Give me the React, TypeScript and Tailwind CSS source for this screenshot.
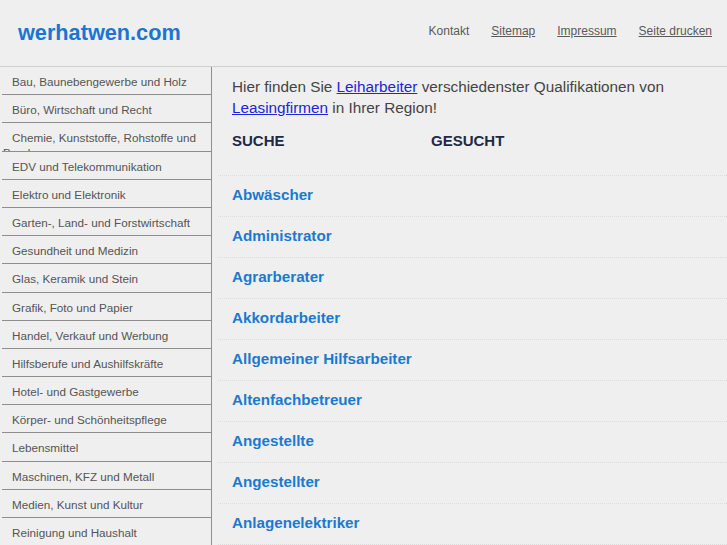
import React from 'react'

const categories = [
  'Bau, Baunebengewerbe und Holz',
  'Büro, Wirtschaft und Recht',
  'Chemie, Kunststoffe, Rohstoffe und Bergbau',
  'EDV und Telekommunikation',
  'Elektro und Elektronik',
  'Garten-, Land- und Forstwirtschaft',
  'Gesundheit und Medizin',
  'Glas, Keramik und Stein',
  'Grafik, Foto und Papier',
  'Handel, Verkauf und Werbung',
  'Hilfsberufe und Aushilfskräfte',
  'Hotel- und Gastgewerbe',
  'Körper- und Schönheitspflege',
  'Lebensmittel',
  'Maschinen, KFZ und Metall',
  'Medien, Kunst und Kultur',
  'Reinigung und Haushalt',
  'Sicherheit und Bewachung',
  'Transport und Logistik',
]

const jobs = [
  'Abwäscher',
  'Administrator',
  'Agrarberater',
  'Akkordarbeiter',
  'Allgemeiner Hilfsarbeiter',
  'Altenfachbetreuer',
  'Angestellte',
  'Angestellter',
  'Anlagenelektriker',
  'Anlagenmechaniker',
]

function Header() {
  return (
    <div className="flex h-[67px] items-center justify-between border-b border-[#cfcfcf] pl-[18px] pr-[15px]">
      <a href="#" className="mt-[1px] text-[21.7px] font-bold text-[#1976d2]">
        werhatwen.com
      </a>
      <nav className="-mt-[4px] flex gap-[22px] text-[12px] text-[#5a5a5a]">
        <a href="#">Kontakt</a>
        <a href="#" className="underline">Sitemap</a>
        <a href="#" className="underline">Impressum</a>
        <a href="#" className="underline">Seite drucken</a>
      </nav>
    </div>
  )
}

function Sidebar() {
  return (
    <div className="w-[212px] shrink-0 border-r border-[#8e8e8e]">
      {categories.map((c) => (
        <a
          key={c}
          href="#"
          className="ml-[2px] block h-[28.2px] overflow-hidden border-b border-[#8e8e8e] pl-[1px] pt-[7px] indent-[9px] text-[11.7px] leading-[15px] text-[#555]"
        >
          {c}
        </a>
      ))}
    </div>
  )
}

export default function App() {
  return (
    <div className="min-h-screen bg-[#efefef] font-['Liberation_Sans',Arial,sans-serif]">
      <Header />
      <div className="flex">
        <Sidebar />
        <div className="flex-1 pl-[6px]">
          <p className="pl-[14px] pt-[9px] text-[15.3px] leading-[21px] text-[#444]">
            Hier finden Sie <a href="#" className="text-[#2323dd] underline">Leiharbeiter</a> verschiedenster
            Qualifikationen von <a href="#" className="text-[#2323dd] underline">Leasingfirmen</a> in Ihrer Region!
          </p>
          <div className="mt-[12px] flex pl-[14px] text-[15px] font-bold text-[#1e2a44]">
            <div className="w-[199px]">SUCHE</div>
            <div>GESUCHT</div>
          </div>
          <div className="mt-[22px] border-t border-dotted border-[#dcdcdc]">
            {jobs.map((j) => (
              <div key={j} className="flex h-[41px] items-center border-b border-dotted border-[#dcdcdc] pl-[14px]">
                <a href="#" className="text-[15.2px] font-bold text-[#1a7ad0]">
                  {j}
                </a>
              </div>
            ))}
          </div>
        </div>
      </div>
    </div>
  )
}
